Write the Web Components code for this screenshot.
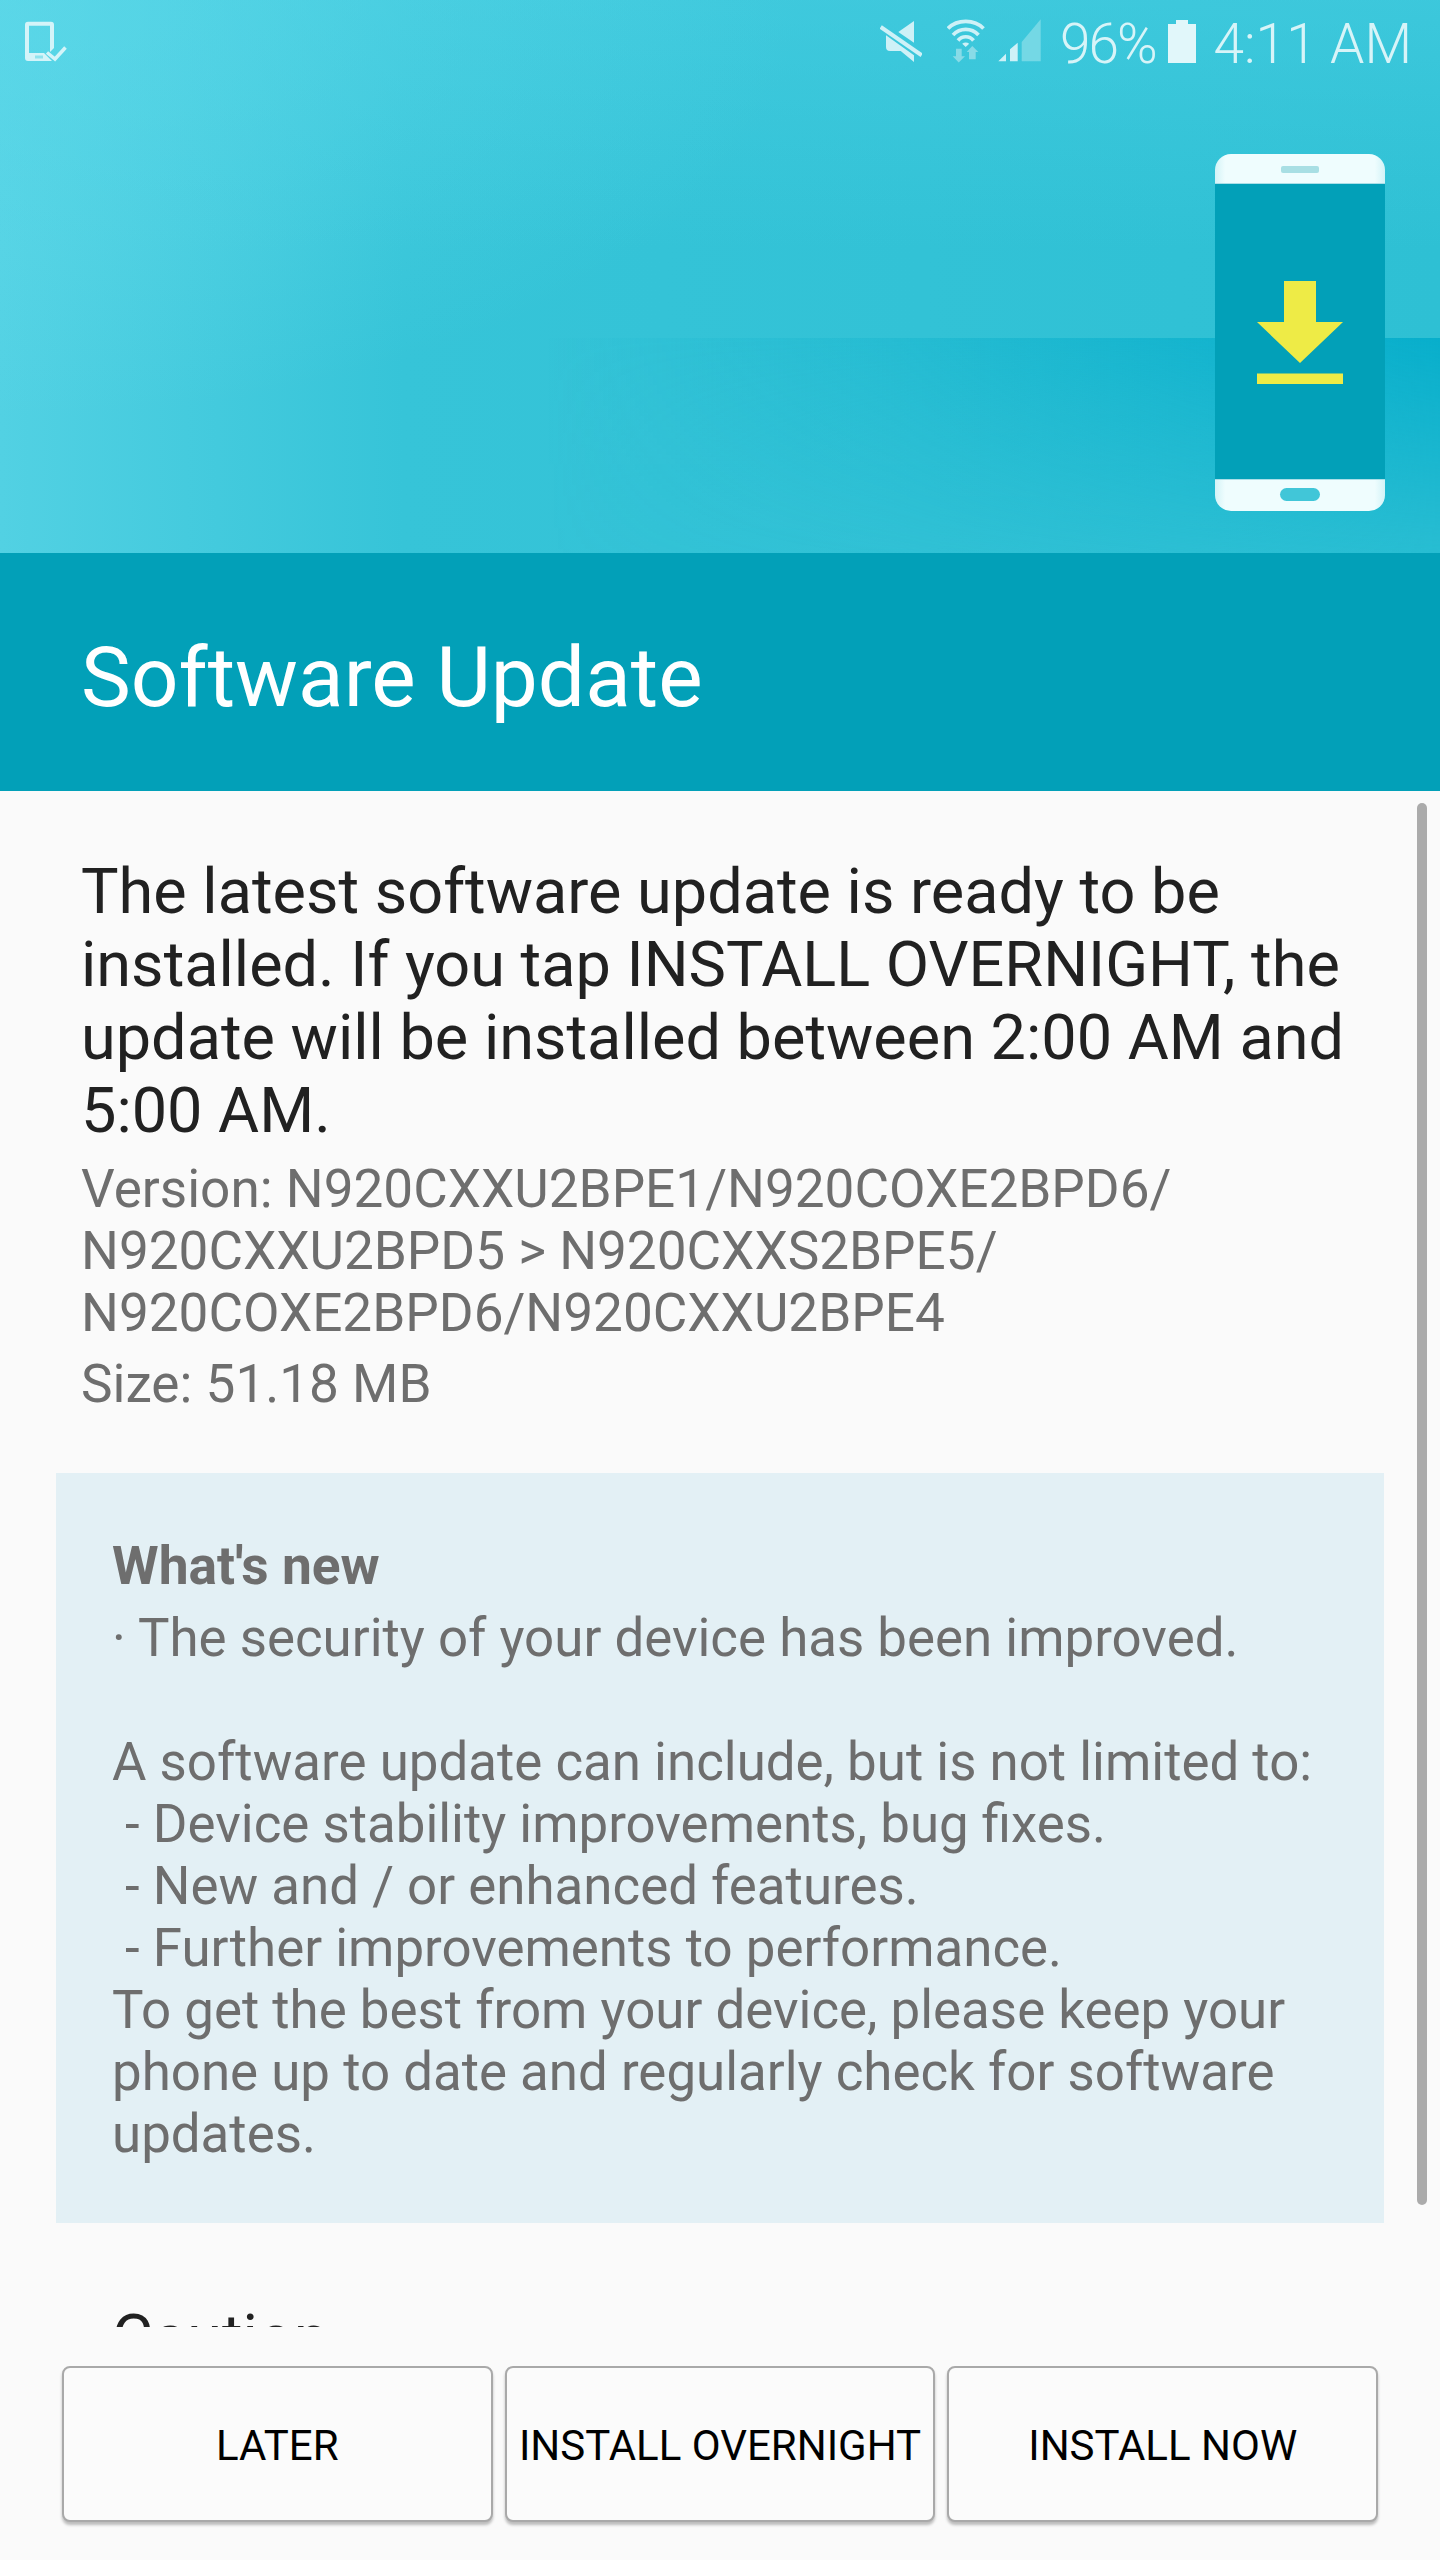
<!DOCTYPE html>
<html>
<head>
<meta charset="utf-8">
<title>Software Update</title>
<style>
    html, body { margin: 0; padding: 0; }
    body { width: 1440px; height: 2560px; overflow: hidden; font-family: Roboto, "Liberation Sans", sans-serif; }
</style>
</head>
<body>

<update-screen>
    <hero-banner slot="hero"></hero-banner>
    <title-band slot="title">Software Update</title-band>
    <update-body slot="body">
        <span slot="lead">The latest software update is ready to be<br>installed. If you tap INSTALL OVERNIGHT, the<br>update will be installed between 2:00 AM and<br>5:00 AM.</span>
        <span slot="version">Version: N920CXXU2BPE1/N920COXE2BPD6/<br>N920CXXU2BPD5 &gt; N920CXXS2BPE5/<br>N920COXE2BPD6/N920CXXU2BPE4</span>
        <span slot="size">Size: 51.18 MB</span>
        <whats-new>
            <span slot="heading">What's new</span>
            · The security of your device has been improved.<br><br>A software update can include, but is not limited to:<br>&nbsp;- Device stability improvements, bug fixes.<br>&nbsp;- New and / or enhanced features.<br>&nbsp;- Further improvements to performance.<br>To get the best from your device, please keep your<br>phone up to date and regularly check for software<br>updates.
        </whats-new>
        <span slot="caution">Caution</span>
    </update-body>
    <action-button slot="actions">LATER</action-button>
    <action-button slot="actions">INSTALL OVERNIGHT</action-button>
    <action-button slot="actions">INSTALL NOW</action-button>
</update-screen>

<script>
// HELPER

function define(name, markup) {
    customElements.define(name, class extends HTMLElement {
        constructor() {
            super();
            this.attachShadow({ mode: "open" }).innerHTML = markup;
        }
    });
}

// SCREEN

define("update-screen", `
    <style>
        :host { display: flex; flex-direction: column; width: 1440px; height: 2560px; background: #fafafa; }
        .body { flex: none; height: 1536px; overflow: hidden; position: relative; }
        .actions { flex: 1; display: flex; gap: 12px; padding: 39px 62px 0; }
        .thumb { position: absolute; left: 1417px; top: 12px; width: 10px; height: 1402px; border-radius: 5px; background: #ababab; }
    </style>
    <slot name="hero"></slot>
    <slot name="title"></slot>
    <div class="body">
        <slot name="body"></slot>
        <div class="thumb"></div>
    </div>
    <div class="actions"><slot name="actions"></slot></div>
`);

// HEADER

define("status-bar", `
    <style>
        :host { display: flex; align-items: center; height: 82px; box-sizing: border-box; padding: 0 28px 0 25px; color: rgba(255, 255, 255, .8); font-size: 55px; font-weight: 300; }
        svg { display: block; flex: none; }
        span { padding-top: 6px; }
        .left { margin-right: auto; }
        .pct { margin-left: 19px; letter-spacing: -2px; }
        .batt { margin-left: 12px; }
        .time { margin-left: 18px; }
        .mute { margin-right: 25px; }
        .wifi { margin-right: 13px; }
    </style>
    <svg class="left" width="42" height="42" viewBox="0 0 42 42">
        <path d="M3 1.700h23a3 3 0 0 1 3 3V28l-4 4V5.700H4V33h15l8 8H3a3 3 0 0 1-3-3V4.700a3 3 0 0 1 3-3z" fill="#d4f4f9"/>
        <rect x="10" y="35.500" width="8" height="3" fill="#8fe3ee"/>
        <path d="M22 32.500l8 6.500 10.500-11.500" fill="none" stroke="#d4f4f9" stroke-width="3.500"/>
    </svg>
    <svg class="mute" width="42" height="42" viewBox="0 0 42 42">
        <path d="M18.300 12L34 1v21.700z" fill="#cef1f7"/>
        <path d="M6 15.300L34 35.300V42L20.700 31H10a4 4 0 0 1-4-4z" fill="#cef1f7"/>
        <path d="M.7 7l41 28.300" stroke="#cef1f7" stroke-width="4" fill="none"/>
    </svg>
    <svg class="wifi" width="38" height="46" viewBox="0 0 38 46">
        <g fill="none" stroke="#cef1f7" stroke-width="3.700">
            <path d="M1 10.500C10 1 27.500 1 36.500 10.500"/>
            <path d="M6 17C13 9.500 24.500 9.500 31.500 17"/>
            <path d="M11 22.500C15 17.500 22.500 17.500 26.500 22.500"/>
        </g>
        <path d="M18.700 29l-3.500-3.300c2-1.500 5-1.500 7 0z" fill="#cef1f7"/>
        <path d="M9 30.700h5.700v7.600H18L11.700 44.500 5.700 38.300H9z" fill="#88dbe7"/>
        <path d="M22 41.300V34h-2.300l5.600-6 6 6h-2.600v7.300z" fill="#88dbe7"/>
    </svg>
    <svg width="43" height="44" viewBox="0 0 43 44">
        <path d="M.3 42.300L8 34.700v7.600z M12 42.300v-12l7.700-6.600v18.600z" fill="#cef1f7"/>
        <path d="M23.700 42.300V23L42.700.3v42z" fill="#74d8e5"/>
    </svg>
    <span class="pct">96%</span>
    <svg class="batt" width="28" height="43" viewBox="0 0 28 43">
        <path d="M8 0h12v4h8v39H0V4h8z" fill="#e1f7fa"/>
    </svg>
    <span class="time">4:11 AM</span>
`);

define("phone-art", `
    <style>
        :host { display: block; width: 170px; height: 357px; }
        svg { display: block; }
    </style>
    <svg width="170" height="357" viewBox="0 0 170 357">
        <defs>
            <linearGradient id="edge">
                <stop offset="0" stop-color="#d3f3f7"/>
                <stop offset=".06" stop-color="#effdfe"/>
                <stop offset=".94" stop-color="#effdfe"/>
                <stop offset="1" stop-color="#d3f3f7"/>
            </linearGradient>
        </defs>
        <rect width="170" height="357" rx="16" fill="url(#edge)"/>
        <rect y="29" width="170" height="297" fill="#a3dce6" opacity=".9"/>
        <rect y="30" width="170" height="295" fill="#02a0b8"/>
        <rect x="66" y="12" width="38" height="7" rx="2" fill="#a8dfe4"/>
        <rect x="65" y="334" width="40" height="13" rx="6.500" fill="#41c6d8"/>
        <path d="M69 127h32v41h27l-43 41-43-41h27z" fill="#eeeb46"/>
        <rect x="42" y="219.500" width="86" height="10.500" fill="#eeeb46"/>
    </svg>
`);

define("hero-banner", `
    <style>
        :host { display: flex; flex-direction: column; position: relative; height: 553px; overflow: hidden;
            background:
                radial-gradient(800px 420px at 0 0, rgba(112, 226, 240, .4), rgba(112, 226, 240, 0)),
                linear-gradient(180deg, rgba(72, 206, 226, .55) 0, rgba(72, 206, 226, 0) 45%),
                linear-gradient(90deg, #52d1e3 0, #36c4d8 28%, #2ec0d4 100%); }
        .fold { position: absolute; left: 0; right: 0; top: 338px; bottom: 0;
            background: linear-gradient(90deg, rgba(10, 175, 203, 0) 38%, rgba(10, 175, 203, .3) 62%, rgba(8, 174, 203, 1) 100%);
            -webkit-mask-image: linear-gradient(180deg, #000 0%, rgba(0, 0, 0, .15) 100%);
            mask-image: linear-gradient(180deg, #000 0%, rgba(0, 0, 0, .15) 100%); }
        status-bar, phone-art { position: relative; }
        phone-art { align-self: flex-end; margin: 72px 55px 0 0; }
    </style>
    <div class="fold"></div>
    <status-bar></status-bar>
    <phone-art></phone-art>
`);

define("title-band", `
    <style>
        :host { display: flex; align-items: center; box-sizing: border-box; height: 238px; padding: 9px 81px 0; background: #02a0b8; color: #fff; font-size: 83.800px; font-weight: 400; }
    </style>
    <slot></slot>
`);

// CONTENT

define("update-body", `
    <style>
        :host { display: block; padding-top: 64px; color: #212121; }
        .intro { padding: 0 56px 0 81px; }
        .lead { font-size: 63px; line-height: 73px; }
        .version { margin-top: 11px; font-size: 53.100px; line-height: 62px; color: #6e6e6e; }
        .size { margin-top: 9px; font-size: 53.100px; line-height: 62px; color: #6e6e6e; }
        .box { margin: 58px 56px 0; }
        .caution { margin: 78px 0 0 112px; font-size: 63px; line-height: 73px; }
    </style>
    <div class="intro">
        <div class="lead"><slot name="lead"></slot></div>
        <div class="version"><slot name="version"></slot></div>
        <div class="size"><slot name="size"></slot></div>
    </div>
    <div class="box"><slot></slot></div>
    <div class="caution"><slot name="caution"></slot></div>
`);

define("whats-new", `
    <style>
        :host { display: block; box-sizing: border-box; height: 750px; padding: 62px 56px 0; background: #e3f0f5; color: #6e6e6e; font-size: 52.850px; line-height: 62px; }
        .heading { font-weight: 700; font-size: 53.300px; line-height: 62px; margin-bottom: 10px; }
    </style>
    <div class="heading"><slot name="heading"></slot></div>
    <slot></slot>
`);

// FOOTER

define("action-button", `
    <style>
        :host { display: flex; align-items: center; justify-content: center; box-sizing: border-box; width: 431px; height: 156px; padding-top: 2px; background: #fbfbfb; color: #000; font-size: 42px; white-space: nowrap;
            border-radius: 8px; border: 2px solid #a9a9a9; box-shadow: 0 3px 3px rgba(0, 0, 0, .25); }
    </style>
    <slot></slot>
`);
</script>
</body>
</html>
